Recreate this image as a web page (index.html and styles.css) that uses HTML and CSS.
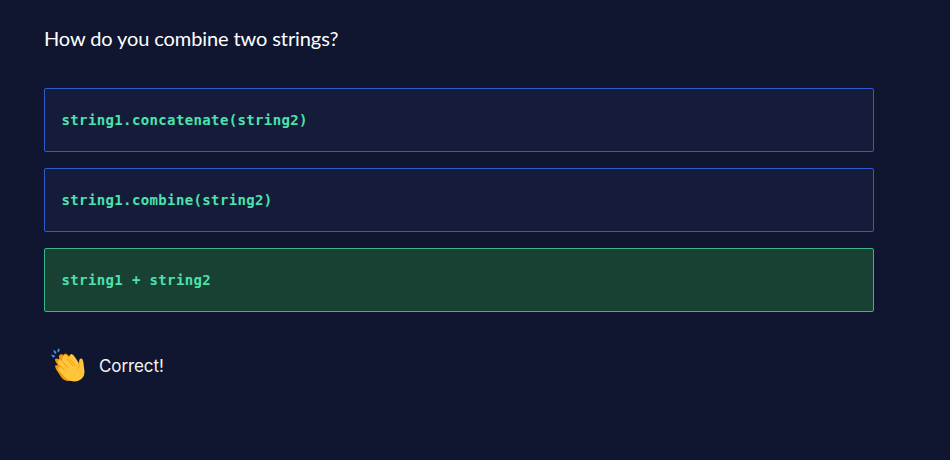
FILE: index.html
```html
<!DOCTYPE html>
<html lang="en">
<head>
<meta charset="utf-8">
<title>Quiz</title>
<link rel="stylesheet" href="styles.css">
</head>
<body>
<main class="quiz">
  <h1 class="question">How do you combine two strings?</h1>
  <div class="options">
    <div class="option"><code>string1.concatenate(string2)</code></div>
    <div class="option"><code>string1.combine(string2)</code></div>
    <div class="option option-correct"><code>string1 + string2</code></div>
  </div>
  <div class="feedback">
    <svg class="clap" viewBox="0 0 35 35" aria-hidden="true">
      <g fill="#4295e8">
        <path d="M0 6.2 3.8 7.1Q4.4 9 2.9 9.3Q1.1 8.8 0 6.2Z"/>
        <path d="M2.1 1.6Q5 2.1 5.6 4.1Q5.2 5.9 3.7 5.2Z"/>
        <path d="M7.5 0 8.9 .5Q9.2 3 7.4 3.9Q5.7 3.2 7.5 0Z"/>
      </g>
      <path fill="#f59b0b" d="M4.5 13Q3.3 10.8 5.1 10.2L8.5 11Q7.6 7.1 9.5 6.3Q11 5.5 12.8 6.6Q13.4 4.8 15.8 5.5L20 9 27 17 25 30 19 33.4Q13.8 33.8 10.2 29L5.2 21.3Q3.5 18.7 4.8 17L7.2 17.4Z"/>
      <path fill="#ffc63b" d="M12.7 8Q14.5 6 16.8 8L19 10Q18.3 6.2 20.7 5.8Q22.5 5.5 24.4 8.6L29 15.5Q28.5 11 30.7 10.4Q32.8 10.2 33.4 15L34.5 24Q34.4 31 28.2 33.2Q21.5 35.3 15.9 31.2L8.5 23.2Q6.4 20.5 7.9 19.3Q9 18.4 11.2 20L7.9 15.8Q6.5 13.5 8 12.4Q9.2 11.6 11.4 13.5Q10.9 9.6 12.7 8Z"/>
      <path fill="none" stroke="#e7930c" stroke-width=".8" stroke-linecap="round" d="m12 13.6 5.5 6.2M16.8 10.9l5.4 6.7M20.2 11.5l5.2 6.7M10.6 18.6l3.4 3.7M28.9 15.7q.4 3.2-1.5 5"/>
    </svg>
    <span class="verdict">Correct!</span>
  </div>
</main>
</body>
</html>
```
FILE: styles.css
```css
* { box-sizing: border-box; }
body {
  margin: 0;
  min-height: 460px;
  background: #10162f;
  color: #fff;
  font-family: Lato, sans-serif;
}
.quiz {
  width: 874px;
  padding: 23px 0 0 44px;
}
.question {
  margin: 0 0 35px;
  font-size: 20px;
  line-height: 30px;
  font-weight: 400;
  letter-spacing: -0.1px;
}
.options {
  display: grid;
  gap: 16px;
}
.option {
  display: flex;
  align-items: center;
  height: 64px;
  padding: 0 16.5px;
  border: 1px solid #2c5cd1;
  border-radius: 2px;
  background: #151c39;
}
.option-correct {
  border-color: #39b58b;
  background: #184033;
}
.option code {
  color: #4be3ae;
  font: 700 14px/24px "DejaVu Sans Mono", monospace;
  letter-spacing: 0.37px;
}
.feedback {
  display: flex;
  align-items: center;
  gap: 13px;
  margin-top: 36px;
  padding-left: 7px;
}
.clap {
  width: 34px;
  height: 35px;
}
.verdict {
  margin-left: 1px;
  color: #f3f3f5;
  font-family: Inter, sans-serif;
  font-size: 17px;
  line-height: 28px;
  letter-spacing: -0.1px;
}
```
